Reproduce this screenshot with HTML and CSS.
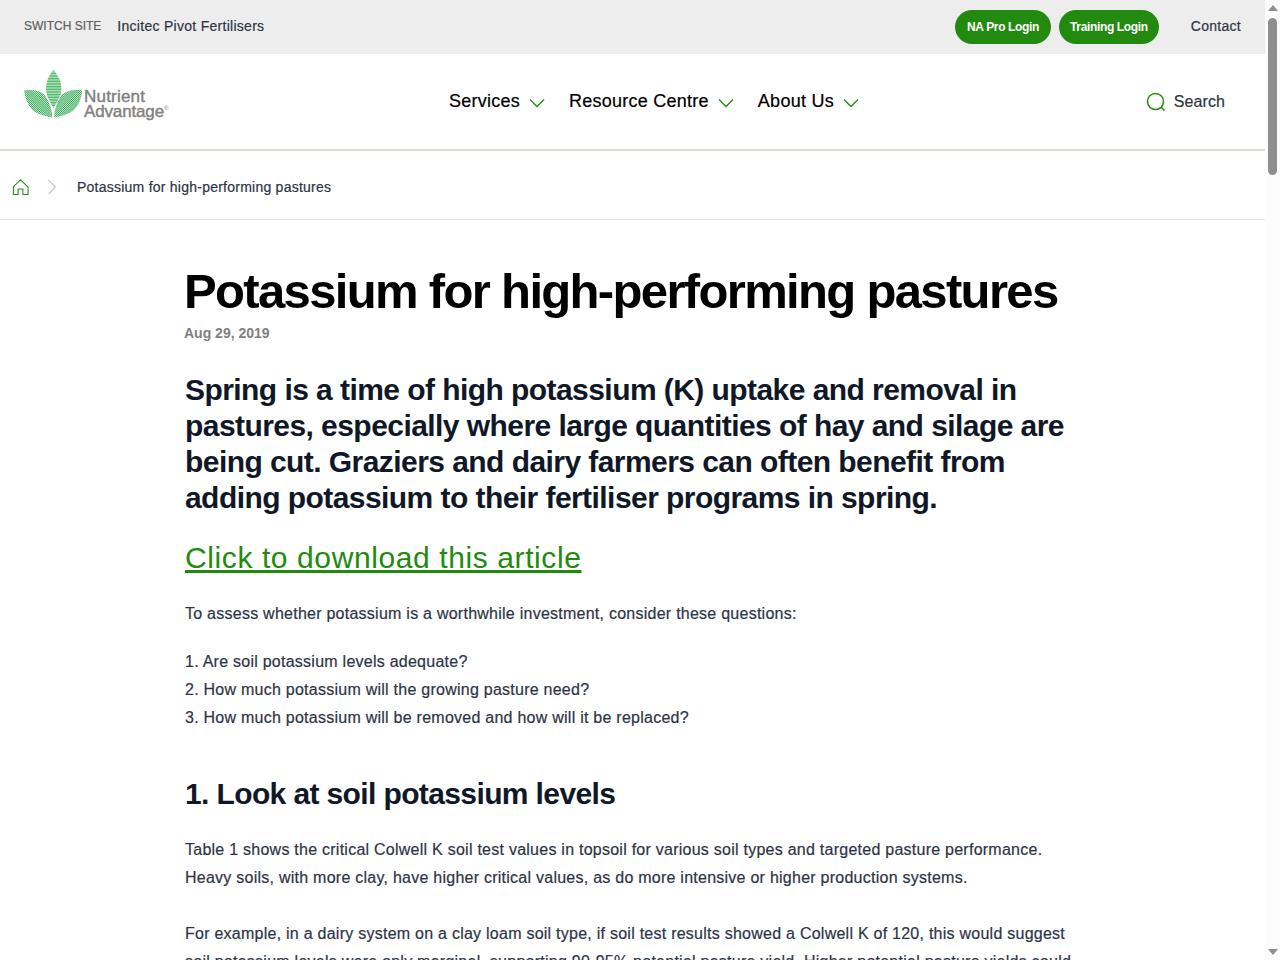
FILE: index.html
```html
<!DOCTYPE html>
<html lang="en">

<head>
    <meta charset="UTF-8">
    <meta name="viewport" content="width=device-width, initial-scale=1.0">
    <title>Potassium for high-performing pastures</title>

    <link rel="stylesheet" href="styles.css">
</head>

<body>
    <div class="page">
        <div class="topBar">
            <div class="topBar-left">
                <span class="switchLabel">SWITCH SITE</span>
                <a class="topLink" href="#">Incitec Pivot Fertilisers</a>
            </div>
            <div class="topBar-right">
                <a class="pillBtn" href="#">NA Pro Login</a>
                <a class="pillBtn" href="#">Training Login</a>
                <a class="topLink contactLink" href="#">Contact</a>
            </div>
        </div>

        <header class="mainNav">
            <a class="logo" href="#">
                <svg class="logoMark" width="60" height="50" viewBox="0 0 60 50">
                    <defs>
                        <pattern id="hatchTop" width="4" height="1.600" patternUnits="userSpaceOnUse">
                            <rect width="4" height="1" fill="#3fb35f"></rect>
                            <rect y="1" width="4" height="0.600" fill="#bfe6c8"></rect>
                        </pattern>
                        <pattern id="hatchLeft" width="1.500" height="1.500" patternUnits="userSpaceOnUse" patternTransform="rotate(45)">
                            <rect width="1.500" height="1" fill="#2fa84f"></rect>
                            <rect y="1" width="1.500" height="0.500" fill="#d3efd9"></rect>
                        </pattern>
                        <pattern id="hatchRight" width="1.500" height="1.500" patternUnits="userSpaceOnUse" patternTransform="rotate(-45)">
                            <rect width="1.500" height="1" fill="#2fa84f"></rect>
                            <rect y="1" width="1.500" height="0.500" fill="#d3efd9"></rect>
                        </pattern>
                    </defs>
                    <path d="M29.500 0C35 6 37.500 13 37.500 19C37.500 26 32.500 32 29.500 38.500C26.500 32 22 26 22 19C22 13 24 6 29.500 0Z" fill="url(#hatchTop)"></path>
                    <path d="M0 20.500C8 19.500 17 20 22 27C26 33 28 40 28.300 47.500C20 46 11 44 6 37C3 33 1 27 0 20.500Z" fill="url(#hatchLeft)"></path>
                    <path d="M58.400 20.500C50.400 19.500 41.400 20 36.400 27C32.400 33 30.400 40 30.100 47.500C38.400 46 47.400 44 52.400 37C55.400 33 57.400 27 58.400 20.500Z" fill="url(#hatchRight)"></path>
                </svg>
                <span class="logoText"><span class="logoTop">Nutrient</span><br>Advantage<sup>®</sup></span>
            </a>

            <nav class="navLinks">
                <a class="navItem" href="#">Services
                    <svg class="chev" width="16" height="10" viewBox="0 0 16 10"><path d="M1 1.500L8 8.500L15 1.500"></path></svg>
                </a>
                <a class="navItem" href="#">Resource Centre
                    <svg class="chev" width="16" height="10" viewBox="0 0 16 10"><path d="M1 1.500L8 8.500L15 1.500"></path></svg>
                </a>
                <a class="navItem" href="#">About Us
                    <svg class="chev" width="16" height="10" viewBox="0 0 16 10"><path d="M1 1.500L8 8.500L15 1.500"></path></svg>
                </a>
            </nav>

            <a class="searchLink" href="#">
                <svg width="20" height="20" viewBox="0 0 20 20" class="searchIcon">
                    <circle cx="9.500" cy="9.500" r="8"></circle>
                    <path d="M15.200 15.200L18.500 18.500"></path>
                </svg>
                Search
            </a>
        </header>

        <div class="breadcrumb">
            <a class="homeIcon" href="#">
                <svg width="17" height="17" viewBox="0 0 18 18">
                    <path d="M1 8.500L9 1L17 8.500V16.500H11.500V10.500H6.500V16.500H1.500V8.500"></path>
                </svg>
            </a>
            <svg class="crumbSep" width="10" height="16" viewBox="0 0 10 16"><path d="M1.500 1L8.500 8L1.500 15"></path></svg>
            <span class="crumbText">Potassium for high-performing pastures</span>
        </div>

        <main class="article">
            <h1>Potassium for high-performing pastures</h1>
            <div class="postDate">Aug 29, 2019</div>

            <p class="intro">Spring is a time of high potassium (K) uptake and removal in pastures, especially where large quantities of hay and silage are being cut. Graziers and dairy farmers can often benefit from adding potassium to their fertiliser programs in spring.</p>

            <a class="downloadLink" href="#">Click to download this article</a>

            <p class="assess">To assess whether potassium is a worthwhile investment, consider these questions:</p>

            <p>
                1. Are soil potassium levels adequate?<br>
                2. How much potassium will the growing pasture need?<br>
                3. How much potassium will be removed and how will it be replaced?
            </p>

            <h2>1. Look at soil potassium levels</h2>

            <p>Table 1 shows the critical Colwell K soil test values in topsoil for various soil types and targeted pasture performance. Heavy soils, with more clay, have higher critical values, as do more intensive or higher production systems.</p>

            <p class="gapTop">For example, in a dairy system on a clay loam soil type, if soil test results showed a Colwell K of 120, this would suggest soil potassium levels were only marginal, supporting 90-95% potential pasture yield. Higher potential pasture yields could be achieved by lifting soil potassium levels through fertiliser applications.</p>
        </main>
    </div>

    <div class="scrollBar">
        <div class="arrowUp"></div>
        <div class="thumb"></div>
        <div class="arrowDown"></div>
    </div>
</body>

</html>
```

FILE: styles.css
```css
* {
    box-sizing: border-box;
}

body {
    margin: 0;
    height: 100vh;
    overflow: hidden;
    display: flex;
    font-family: "Liberation Sans", Arial, sans-serif;
    color: #2d3446;
    background-color: #fff;
}

a {
    text-decoration: none;
    color: inherit;
}

.page {
    flex: 1;
    min-width: 0;
}

/* fake browser scrollbar */
.scrollBar {
    width: 15px;
    height: 100%;
    background-color: #fcfcfc;
    display: flex;
    flex-direction: column;
    align-items: center;
    padding: 5px 0;
}

.arrowUp {
    border-left: 5px solid transparent;
    border-right: 5px solid transparent;
    border-bottom: 6px solid #8f8f8f;
}

.thumb {
    width: 9px;
    height: 157px;
    margin-top: 7px;
    margin-bottom: auto;
    border-radius: 5px;
    background-color: #8f8f8f;
}

.arrowDown {
    border-left: 5px solid transparent;
    border-right: 5px solid transparent;
    border-top: 6px solid #8f8f8f;
}

.topBar {
    height: 54px;
    background-color: #ededed;
    display: flex;
    justify-content: space-between;
    align-items: center;
    padding: 0 24px;
}

.topBar-left,
.topBar-right {
    display: flex;
    align-items: center;
}

.switchLabel {
    font-size: 12px;
    color: #5f5f5f;
    margin-right: 16px;
    margin-bottom: 2px;
    -webkit-text-stroke: 0.2px;
}

.topLink {
    font-size: 14px;
    letter-spacing: 0.28px;
    margin-bottom: 2px;
    -webkit-text-stroke: 0.2px;
}

.pillBtn {
    min-width: 96px;
    height: 34px;
    line-height: 34px;
    padding: 0 11px;
    margin-right: 8px;
    border-radius: 17px;
    background-color: #218a0f;
    color: #fff;
    text-align: center;
    font-size: 12px;
    font-weight: 700;
    letter-spacing: -0.35px;
}

.contactLink {
    margin-left: 24px;
}

.mainNav {
    height: 97px;
    display: flex;
    align-items: center;
    border-bottom: 2px solid #dcdcd3;
    padding: 0 40px 0 24px;
}

.logo {
    display: flex;
    align-items: flex-end;
    width: 425px;
    margin-bottom: 14px;
}

.logoText {
    font-size: 17px;
    line-height: 15px;
    letter-spacing: -0.15px;
    color: #808080;
    margin-bottom: 1px;
    -webkit-text-stroke: 0.4px;
}

.logoTop {
    letter-spacing: 0.2px;
}

.logoText sup {
    font-size: 6px;
    line-height: 0;
    -webkit-text-stroke: 0;
}

.navLinks {
    display: flex;
    gap: 24px;
    flex: 1;
}

.navItem {
    font-size: 18px;
    letter-spacing: 0.25px;
    color: #000;
    display: flex;
    align-items: center;
    gap: 9px;
    -webkit-text-stroke: 0.2px;
}

.chev {
    margin-top: 3px;
}

.chev path {
    fill: none;
    stroke: #218a0f;
    stroke-width: 1.300;
}

.searchLink {
    display: flex;
    align-items: center;
    gap: 8px;
    font-size: 16px;
    letter-spacing: 0.1px;
    -webkit-text-stroke: 0.2px;
}

.searchIcon circle,
.searchIcon path {
    fill: none;
    stroke: #218a0f;
    stroke-width: 1.500;
}

.breadcrumb {
    height: 69px;
    display: flex;
    align-items: center;
    padding-left: 12px;
    padding-top: 4px;
    border-bottom: 1px solid #e4e4e0;
}

.homeIcon {
    display: flex;
}

.homeIcon path {
    fill: none;
    stroke: #218a0f;
    stroke-width: 1.100;
}

.crumbSep {
    margin-left: 18px;
}

.crumbSep path {
    fill: none;
    stroke: #c9c9c9;
    stroke-width: 1.300;
}

.crumbText {
    font-size: 14px;
    letter-spacing: 0.24px;
    margin-left: 20px;
    -webkit-text-stroke: 0.2px;
}

.article {
    width: 890px;
    margin-left: 185px;
    padding-top: 42px;
}

h1 {
    margin: 0 0 0 -1px;
    font-size: 49px;
    line-height: 58px;
    letter-spacing: -1.66px;
    color: #000;
}

.postDate {
    font-size: 14px;
    font-weight: 700;
    color: #808080;
    margin-top: 5px;
    margin-left: -1px;
}

p {
    font-size: 16px;
    line-height: 28px;
    letter-spacing: 0.25px;
    margin: 20px 0;
    -webkit-text-stroke: 0.2px;
}

.intro {
    font-size: 30px;
    line-height: 36px;
    font-weight: 700;
    letter-spacing: -0.56px;
    color: #101828;
    margin: 31px 0 25px;
    -webkit-text-stroke: 0;
}

.downloadLink {
    font-size: 30px;
    letter-spacing: 0.6px;
    color: #218a0f;
    text-decoration: underline;
}

.assess {
    margin-top: 25px;
}

.gapTop {
    margin-top: 28px;
}

h2 {
    font-size: 30px;
    line-height: 36px;
    letter-spacing: -0.62px;
    color: #101828;
    margin: 44px 0 24px;
}
```
